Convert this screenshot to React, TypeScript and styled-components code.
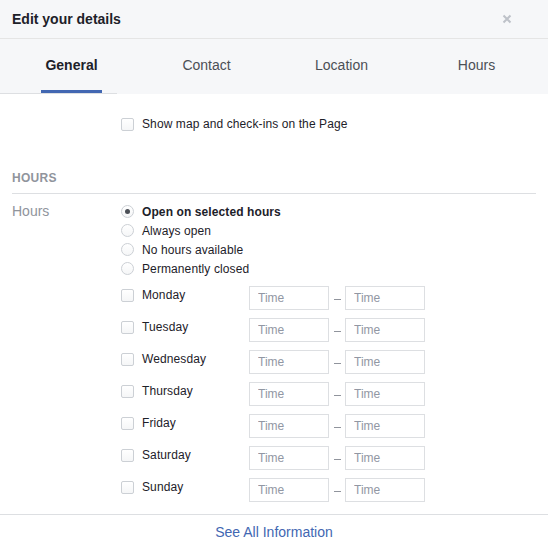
import React from "react";
import styled, { createGlobalStyle } from "styled-components";

const Global = createGlobalStyle`
  html, body { margin: 0; padding: 0; background: #fff; }
  body { font-family: "Liberation Sans", Arial, Helvetica, sans-serif; color: #1d2129; }
  * { box-sizing: border-box; }
`;

const Dialog = styled.div`
  width: 548px;
  height: 542px;
  overflow: hidden;
  display: flex;
  flex-direction: column;
  background: #fff;
`;

const Header = styled.div`
  height: 39px;
  background: #f6f7f9;
  border-bottom: 1px solid #e5e5e5;
  display: flex;
  align-items: center;
  justify-content: space-between;
  padding: 0 36px 0 12px;
`;

const Title = styled.div`
  font-size: 14px;
  font-weight: bold;
  color: #1d2129;
  line-height: 18px;
  margin-top: -1px;
`;

const Close = styled.button`
  border: 0;
  background: none;
  padding: 0;
  width: 10px;
  height: 10px;
  display: flex;
  cursor: pointer;
  margin-top: -1px;
`;

const TabBar = styled.div`
  position: relative;
  height: 55px;
  background: #f6f7f9;
  display: grid;
  grid-template-columns: repeat(4, 135px);
  padding: 0 4px;
  &::after {
    content: "";
    position: absolute;
    left: 0;
    bottom: 0;
    width: 117px;
    height: 1px;
    background: #dddfe2;
  }
`;

const Tab = styled.div`
  display: flex;
  justify-content: center;
  align-items: flex-start;
  padding-top: 17px;
`;

const TabLabel = styled.span<{ $active?: boolean }>`
  font-size: 14px;
  line-height: 18px;
  font-weight: ${(p) => (p.$active ? "bold" : "normal")};
  color: ${(p) => (p.$active ? "#1d2129" : "#4b4f56")};
  padding: 0 4px 7px;
  border-bottom: 3px solid ${(p) => (p.$active ? "#4267b2" : "transparent")};
  height: 37px;
  display: flex;
  align-items: flex-start;
`;

const Content = styled.div`
  flex: 1;
  padding: 21px 12px 0;
  display: flex;
  flex-direction: column;
`;

const Indented = styled.div`
  padding-left: 109px;
`;

const CheckRow = styled.label`
  display: flex;
  align-items: center;
  gap: 8px;
  font-size: 12px;
  letter-spacing: 0.1px;
  line-height: 18px;
  color: #1d2129;
  height: 18px;
`;

const Box = styled.span`
  width: 13px;
  height: 13px;
  border: 1px solid #ccd0d5;
  border-radius: 2px;
  background: linear-gradient(#fff, #f5f6f7);
  flex: none;
`;

const SectionHeading = styled.div`
  margin-top: 36px;
  font-size: 12px;
  font-weight: bold;
  color: #90949c;
  line-height: 17px;
  padding-top: 1px;
  padding-bottom: 6px;
  border-bottom: 1px solid #dddfe2;
  letter-spacing: 0.3px;
`;

const Field = styled.div`
  display: grid;
  grid-template-columns: 109px 1fr;
  padding-top: 8px;
`;

const FieldLabel = styled.div`
  font-size: 14px;
  line-height: 19px;
  color: #90949c;
`;

const RadioList = styled.div`
  display: flex;
  flex-direction: column;
`;

const RadioRow = styled.label<{ $bold?: boolean }>`
  display: flex;
  align-items: center;
  gap: 8px;
  height: 19px;
  font-size: 12px;
  letter-spacing: 0.1px;
  font-weight: ${(p) => (p.$bold ? "bold" : "normal")};
  color: #1d2129;
`;

const Radio = styled.span<{ $checked?: boolean }>`
  width: 13px;
  height: 13px;
  border-radius: 50%;
  border: 1px solid #ccd0d5;
  background: linear-gradient(#fff, #f5f6f7);
  flex: none;
  display: flex;
  align-items: center;
  justify-content: center;
  &::after {
    content: "";
    width: 5px;
    height: 5px;
    border-radius: 50%;
    background: ${(p) => (p.$checked ? "#4b4f56" : "transparent")};
  }
`;

const Days = styled.div`
  display: flex;
  flex-direction: column;
  gap: 8px;
  margin-top: 8px;
`;

const DayRow = styled.div`
  display: grid;
  grid-template-columns: 128px 80px 16px 80px;
  align-items: start;
`;

const DayCheck = styled.label`
  display: flex;
  align-items: center;
  gap: 8px;
  height: 18px;
  font-size: 12px;
  letter-spacing: 0.1px;
  color: #1d2129;
`;

const TimeInput = styled.input`
  width: 80px;
  height: 24px;
  border: 1px solid #dddfe2;
  padding: 0 8px;
  font-family: inherit;
  font-size: 12px;
  color: #1d2129;
  outline: none;
  background: #fff;
  &::placeholder { color: #9197a3; }
`;

const Dash = styled.span`
  height: 24px;
  display: flex;
  justify-content: center;
  padding-top: 13px;
  &::before {
    content: "";
    width: 7px;
    height: 1px;
    background: #90949c;
  }
`;

const Footer = styled.div`
  flex: none;
  height: 28px;
  border-top: 1px solid #dddfe2;
  padding-top: 8px;
  text-align: center;
  font-size: 14px;
  line-height: 18px;
`;

const FooterLink = styled.a`
  color: #4267b2;
  text-decoration: none;
  cursor: pointer;
`;

const tabs = ["General", "Contact", "Location", "Hours"];
const radios = ["Open on selected hours", "Always open", "No hours available", "Permanently closed"];
const days = ["Monday", "Tuesday", "Wednesday", "Thursday", "Friday", "Saturday", "Sunday"];

export default function App() {
  return (
    <>
      <Global />
      <Dialog>
        <Header>
          <Title>Edit your details</Title>
          <Close aria-label="Close">
            <svg width="10" height="10" viewBox="0 0 10 10">
              <path d="M1.5 1.5 L8.5 8.5 M8.5 1.5 L1.5 8.5" stroke="#bec2c9" strokeWidth="2" strokeLinecap="butt" />
            </svg>
          </Close>
        </Header>
        <TabBar>
          {tabs.map((t, i) => (
            <Tab key={t}>
              <TabLabel $active={i === 0}>{t}</TabLabel>
            </Tab>
          ))}
        </TabBar>
        <Content>
          <Indented>
            <CheckRow>
              <Box />
              Show map and check-ins on the Page
            </CheckRow>
          </Indented>
          <SectionHeading>HOURS</SectionHeading>
          <Field>
            <FieldLabel>Hours</FieldLabel>
            <div>
              <RadioList>
                {radios.map((r, i) => (
                  <RadioRow key={r} $bold={i === 0}>
                    <Radio $checked={i === 0} />
                    {r}
                  </RadioRow>
                ))}
              </RadioList>
              <Days>
                {days.map((d) => (
                  <DayRow key={d}>
                    <DayCheck>
                      <Box />
                      {d}
                    </DayCheck>
                    <TimeInput placeholder="Time" />
                    <Dash />
                    <TimeInput placeholder="Time" />
                  </DayRow>
                ))}
              </Days>
            </div>
          </Field>
        </Content>
        <Footer>
          <FooterLink>See All Information</FooterLink>
        </Footer>
      </Dialog>
    </>
  );
}
